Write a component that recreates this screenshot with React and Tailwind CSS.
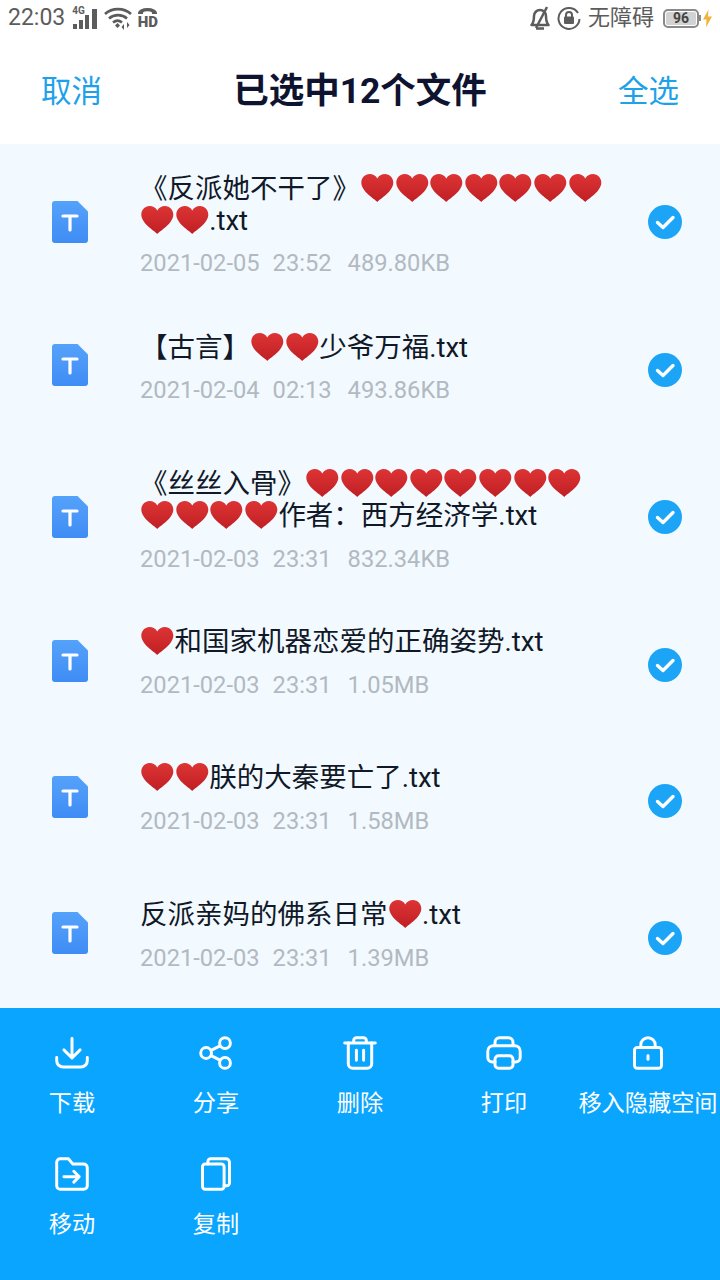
import { Fragment } from "react";

const font = "font-['Roboto','Noto_Sans_CJK_SC',sans-serif]";

const files = [
  { id: 1, title: "《反派她不干了》♥♥♥♥♥♥♥♥♥.txt", date: "2021-02-05", time: "23:52", size: "489.80KB", row: "h-[156px]", icon: "mt-0", body: "pt-[8px]", meta: "mt-[10px]" },
  { id: 2, title: "【古言】♥♥少爷万福.txt", date: "2021-02-04", time: "02:13", size: "493.86KB", row: "h-[140px]", icon: "-mt-[10px]", body: "pb-[2px]", meta: "mt-[10px]" },
  { id: 3, title: "《丝丝入骨》♥♥♥♥♥♥♥♥♥♥♥♥作者：西方经济学.txt", date: "2021-02-03", time: "23:31", size: "832.34KB", row: "h-[154px]", icon: "mt-0", body: "pt-[8px]", meta: "mt-[11px]" },
  { id: 4, title: "♥和国家机器恋爱的正确姿势.txt", date: "2021-02-03", time: "23:31", size: "1.05MB", row: "h-[141px]", icon: "-mt-[8px]", body: "pb-[2px]", meta: "mt-[11px]" },
  { id: 5, title: "♥♥朕的大秦要亡了.txt", date: "2021-02-03", time: "23:31", size: "1.58MB", row: "h-[132px]", icon: "-mt-[8px]", body: "pb-[3px]", meta: "mt-[11px]" },
  { id: 6, title: "反派亲妈的佛系日常♥.txt", date: "2021-02-03", time: "23:31", size: "1.39MB", row: "h-[141px]", icon: "-mt-[10px]", body: "pb-[3px]", meta: "mt-[11px]" },
];

function Heart() {
  return (
    <svg width="34.6" height="30" viewBox="0 0 34.6 30" className="inline-block align-[-5px]">
      <defs>
        <linearGradient id="heartFill" x1="0" y1="0" x2="0" y2="1">
          <stop offset="0" stopColor="#dd3434" />
          <stop offset="1" stopColor="#c01f25" />
        </linearGradient>
      </defs>
      <path
        d="M17.3 29C14 25.5 1.3 18.5 1.3 9.6 1.3 4.8 5 1 9.6 1c3.3 0 6.2 1.6 7.7 4.4C18.800 2.600 21.700 1 25 1c4.600 0 8.300 3.800 8.300 8.600 0 8.900-12.700 15.900-16 19.400z"
        fill="url(#heartFill)"
      />
    </svg>
  );
}

function Title({ text }) {
  const parts = text.split("♥");
  return (
    <p className="w-[465px] text-[27.5px] leading-[32px] text-[#111827]">
      {parts.map((part, i) => (
        <Fragment key={i}>
          {part}
          {i < parts.length - 1 && <Heart />}
        </Fragment>
      ))}
    </p>
  );
}

function FileIcon() {
  return (
    <svg width="36" height="42" viewBox="0 0 36 42">
      <defs>
        <linearGradient id="fileFill" x1="0" y1="0" x2="0" y2="1">
          <stop offset="0" stopColor="#55a2fb" />
          <stop offset="1" stopColor="#3f8cf5" />
        </linearGradient>
      </defs>
      <path d="M3 0h22.5L36 10.5V39a3 3 0 0 1-3 3H3a3 3 0 0 1-3-3V3a3 3 0 0 1 3-3z" fill="url(#fileFill)" />
      <path d="M11 15h14M18 15v14" stroke="#fff" strokeWidth="3.2" strokeLinecap="round" fill="none" />
    </svg>
  );
}

function CheckIcon() {
  return (
    <svg width="34" height="34" viewBox="0 0 34 34">
      <circle cx="17" cy="17" r="17" fill="#1ca5f7" />
      <path d="M9.5 17.500l5.500 5 10-10" stroke="#fff" strokeWidth="3.4" strokeLinecap="round" strokeLinejoin="round" fill="none" />
    </svg>
  );
}

function ActionIcon({ children }) {
  return (
    <svg width="36" height="36" viewBox="0 0 40 40" className="m-[2px]" fill="none" stroke="#fff" strokeWidth="3.3" strokeLinecap="round" strokeLinejoin="round">
      {children}
    </svg>
  );
}

const actions = [
  {
    label: "下载",
    icon: (
      <>
        <path d="M20 4v21M11 16.500l9 9 9-9" />
        <path d="M3 25v3.500a7 7 0 0 0 7 7h20a7 7 0 0 0 7-7V25" />
      </>
    ),
  },
  {
    label: "分享",
    icon: (
      <>
        <circle cx="9" cy="20" r="6" />
        <circle cx="30" cy="9" r="6" />
        <circle cx="30" cy="31" r="6" />
        <path d="M14.500 17l10-5M14.500 23l10 5" />
      </>
    ),
  },
  {
    label: "删除",
    icon: (
      <>
        <path d="M3 9h34M13 9V6a3 3 0 0 1 3-3h8a3 3 0 0 1 3 3v3" />
        <path d="M7 9v23a5 5 0 0 0 5 5h16a5 5 0 0 0 5-5V9" />
        <path d="M16 17v11M24 17v11" />
      </>
    ),
  },
  {
    label: "打印",
    icon: (
      <>
        <path d="M10 12V8a5 5 0 0 1 5-5h10a5 5 0 0 1 5 5v4" />
        <path d="M10 30H7a5 5 0 0 1-5-5v-7a6 6 0 0 1 6-6h24a6 6 0 0 1 6 6v7a5 5 0 0 1-5 5h-3" />
        <path d="M10 27a4 4 0 0 1 4-4h12a4 4 0 0 1 4 4v6a4 4 0 0 1-4 4H14a4 4 0 0 1-4-4z" />
      </>
    ),
  },
  {
    label: "移入隐藏空间",
    icon: (
      <>
        <rect x="5" y="14" width="30" height="23" rx="3" />
        <path d="M12 14v-3a8 8 0 0 1 16 0v3" />
        <path d="M20 23v4" />
      </>
    ),
  },
  {
    label: "移动",
    icon: (
      <>
        <path d="M3 7a4 4 0 0 1 4-4h9l5 6h12a4 4 0 0 1 4 4v20a4 4 0 0 1-4 4H7a4 4 0 0 1-4-4z" />
        <path d="M11 23h17M22 17l6 6-6 6" />
      </>
    ),
  },
  {
    label: "复制",
    icon: (
      <>
        <rect x="5" y="9" width="24" height="28" rx="3" />
        <path d="M11 9V6a3 3 0 0 1 3-3h17a4 4 0 0 1 4 4v23a3 3 0 0 1-3 3h-3" />
      </>
    ),
  },
];

function StatusBar() {
  return (
    <div className="h-[36px] flex items-center justify-between px-2 text-[#5c5c5c]">
      <div className="flex items-center">
        <span className="text-[23px] leading-[36px]">22:03</span>
        {/* signal */}
        <div className="ml-[7px] w-[27px] h-[24px] flex flex-col">
          <span className="text-[10px] leading-[9px] font-bold">4G</span>
        </div>
        <svg width="27" height="24" viewBox="0 0 27 24" fill="#5c5c5c" className="-ml-[27px]">
          <rect x="1" y="18" width="4" height="5" />
          <rect x="7" y="14" width="4" height="9" />
          <rect x="13" y="9" width="4" height="14" />
          <rect x="20" y="3" width="5" height="20" />
        </svg>
        {/* wifi */}
        <svg width="28" height="24" viewBox="0 0 28 24" fill="none" stroke="#5c5c5c" strokeWidth="2.600" className="ml-[5px]">
          <path d="M1 8c7-6.500 19-6.500 26 0M5 12.500c5-4.500 13-4.500 18 0M9 16.500c3-2.500 6-2.500 9 0" />
          <path d="M11 19.500l2.500-2.500 2.500 2.500-2.500 2.500z" fill="#5c5c5c" stroke="none" />
          <path d="M20 24v-6l-2.500 3zM23 16v6l2.500-3z" fill="#5c5c5c" stroke="none" />
        </svg>
        {/* HD call */}
        <div className="ml-[5px] w-[21px] h-[24px] flex flex-col items-center">
          <svg width="19" height="6" viewBox="0 0 19 6" fill="#5c5c5c" className="shrink-0 mt-[2px]">
            <path d="M0 5a9.500 5 0 0 1 19 0v1h-5V4.500a5 2 0 0 0-9 0V6H0z" />
          </svg>
          <span className="mt-[2px] text-[15px] leading-[13px] font-black">HD</span>
        </div>
      </div>
      <div className="flex items-center">
        {/* muted bell */}
        <svg width="20" height="24" viewBox="0 0 20 24" fill="none" stroke="#5c5c5c" strokeWidth="2.500" strokeLinejoin="round">
          <path d="M1.500 19c2.500-3 2.500-5 2.500-9a6 6 0 0 1 12 0c0 4 0 6 2.500 9z" />
          <path d="M6 22.500h8M17 1L6 22" />
        </svg>
        {/* rotation lock */}
        <svg width="24" height="24" viewBox="0 0 24 24" className="ml-[7px]" fill="none" stroke="#5c5c5c" strokeWidth="2">
          <path d="M21 7a10.500 10.500 0 1 0 1.500 6" />
          <rect x="7" y="10.500" width="10" height="7.500" rx="1" fill="#5c5c5c" stroke="none" />
          <path d="M9 11V9a3 3 0 0 1 6 0v2" />
        </svg>
        <span className="ml-[7px] text-[22px] leading-[36px]">无障碍</span>
        {/* battery */}
        <div className="ml-[9px] w-[36px] h-[19px] border-2 border-[#8a8a8a] rounded-[5px] p-[1px]">
          <div className="h-full bg-[#d2d2d2] rounded-[2px] flex items-center justify-center text-[14px] leading-none font-bold text-[#444444]">
            96
          </div>
        </div>
        <div className="w-[2px] h-[6px] bg-[#8a8a8a]" />
        <svg width="9" height="19" viewBox="0 0 9 18" className="ml-[2px]" fill="#f2b33d">
          <path d="M5.500 0L0 10h3.500L3 18l6-11H5z" />
        </svg>
      </div>
    </div>
  );
}

export default function App() {
  return (
    <div className={`w-[720px] h-[1280px] flex flex-col bg-white overflow-hidden ${font}`}>
      <StatusBar />

      {/* Header */}
      <header className="h-[108px] flex items-center justify-between px-[41px] pt-[3px]">
        <button className="text-[30.5px] text-[#1da2ea]">取消</button>
        <h1 className="text-[35.5px] font-bold text-[#0e1330]">已选中12个文件</h1>
        <button className="text-[30.5px] text-[#1da2ea]">全选</button>
      </header>

      {/* List */}
      <main className="flex-1 bg-[#f2faff] overflow-hidden">
        {files.map((file) => (
          <div key={file.id} className={`flex items-center pl-[52px] pr-[38px] ${file.row}`}>
            <div className={`w-[36px] shrink-0 flex ${file.icon}`}>
              <FileIcon />
            </div>
            <div className={`ml-[52px] flex-1 ${file.body}`}>
              <Title text={file.title} />
              <p className={`flex text-[23.7px] leading-[32px] text-[#b2b9c1] ${file.meta}`}>
                <span>{file.date}</span>
                <span className="ml-[13px]">{file.time}</span>
                <span className="ml-[16px]">{file.size}</span>
              </p>
            </div>
            <CheckIcon />
          </div>
        ))}
      </main>

      {/* Bottom actions */}
      <footer className="h-[272px] bg-[#0aa5ff] grid grid-cols-5 auto-rows-[121px] pt-[25px]">
        {actions.map((action) => (
          <div key={action.label} className="flex flex-col items-center">
            <ActionIcon>{action.icon}</ActionIcon>
            <span className="mt-[14px] text-[23.2px] leading-[32px] text-white whitespace-nowrap">{action.label}</span>
          </div>
        ))}
      </footer>
    </div>
  );
}
